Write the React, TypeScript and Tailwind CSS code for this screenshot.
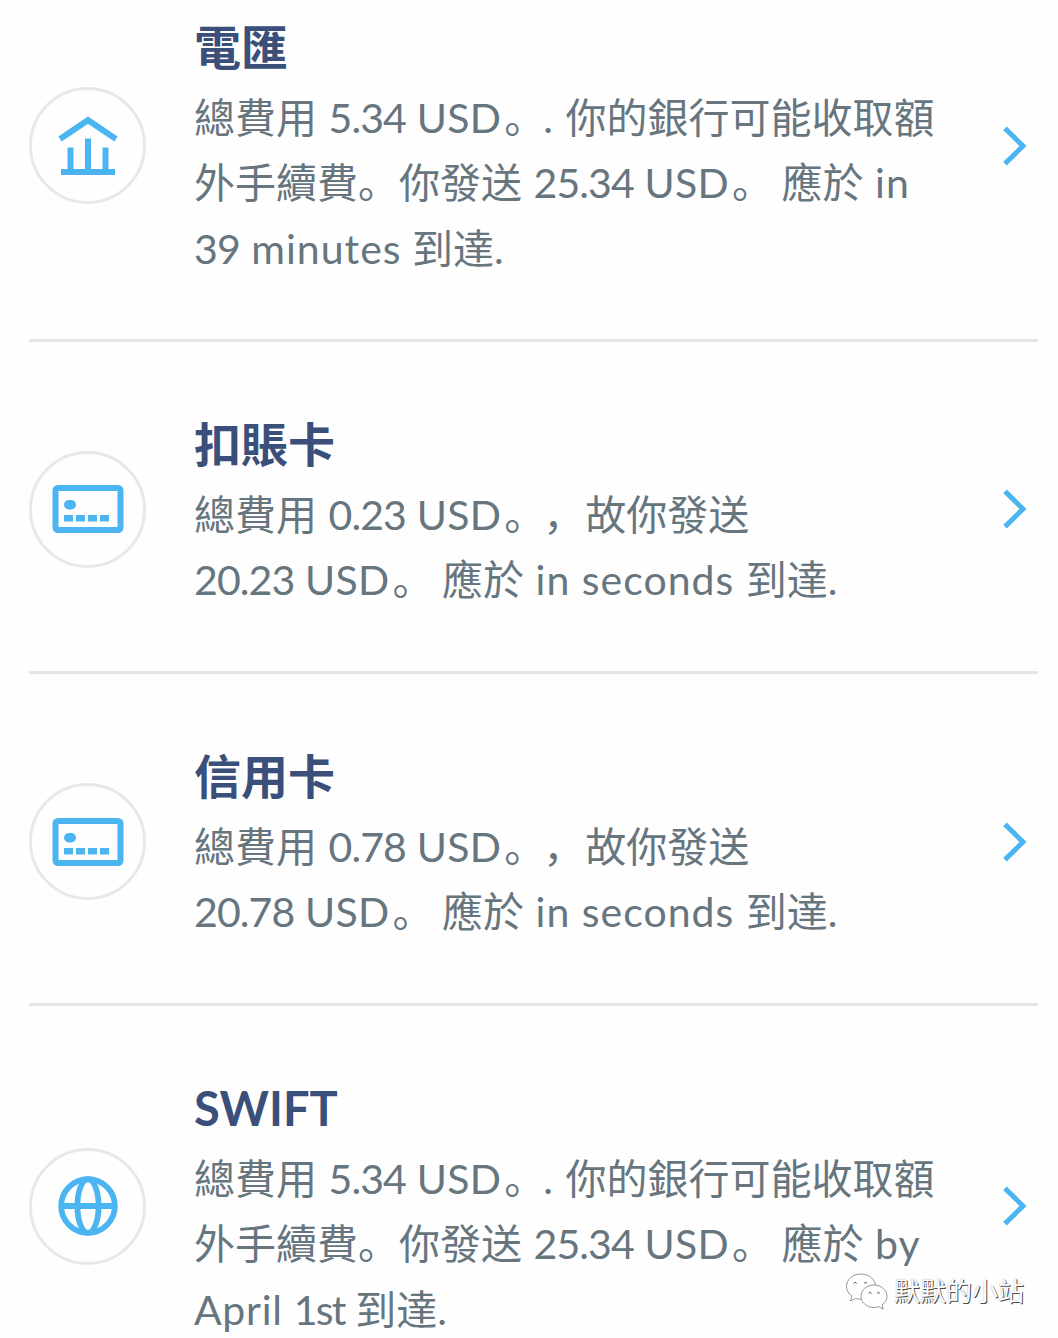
import type { ReactNode } from "react"

type Method = {
  id: string
  title: string
  icon: ReactNode
  lines: ReactNode[]
}

function BankIcon() {
  return (
    <svg width="60" height="60" viewBox="0 0 60 60" fill="none" stroke="#4bb5f1">
      <path d="M2 23 30 4.2 58 23" strokeWidth="6" />
      <path d="M3 56h54M12.5 55V31.5M30 55V22.5M47.5 55V31.5" strokeWidth="6" />
    </svg>
  )
}

function CardIcon() {
  return (
    <svg width="72" height="48" viewBox="0 0 72 48" fill="none">
      <rect x="3.5" y="3" width="65" height="42" rx="2.5" stroke="#4bb5f1" strokeWidth="6" />
      <rect x="12" y="15" width="12" height="9.5" rx="4.7" fill="#4bb5f1" />
      <path d="M12 33.2h9M24 33.2h9M36 33.2h9M48 33.2h9" stroke="#4bb5f1" strokeWidth="6.4" />
    </svg>
  )
}

function GlobeIcon() {
  return (
    <svg width="60" height="60" viewBox="0 0 60 60" fill="none" stroke="#4bb5f1" strokeWidth="5.8">
      <circle cx="30" cy="30" r="26.8" />
      <ellipse cx="30" cy="30" rx="10.6" ry="26.8" />
      <path d="M3 30h54" />
    </svg>
  )
}

function Chevron() {
  return (
    <svg width="24" height="40" viewBox="0 0 24 40" fill="none" stroke="#4bb5f1" strokeWidth="5">
      <path d="M2 2.4 20 20 2 37.6" />
    </svg>
  )
}

function En({ children }: { children: ReactNode }) {
  return <span className="tracking-[1px]">{children}</span>
}

function Num({ children }: { children: ReactNode }) {
  return <span className="tracking-[-0.9px]">{children}</span>
}

function Usd({ amount }: { amount: string }) {
  return (
    <>
      <Num>{amount}</Num>
      <span className="mr-[3px] tracking-[0.3px]"> USD</span>
      <span className="tracking-[-2px]">。</span>
    </>
  )
}

const methods: Method[] = [
  {
    id: "wire",
    title: "電匯",
    icon: <BankIcon />,
    lines: [
      <>總費用<En> </En><Usd amount="5.34" /><En>. </En>你的銀行可能收取額</>,
      <>外手續費。你發送<En> </En><Usd amount="25.34" /> 應於<En> in</En></>,
      <><Num>39</Num><En> minutes</En> 到達.</>,
    ],
  },
  {
    id: "debit",
    title: "扣賬卡",
    icon: <CardIcon />,
    lines: [
      <>總費用<En> </En><Usd amount="0.23" />，<span className="ml-px">故你發送</span></>,
      <><Usd amount="20.23" /> 應於<En> in seconds </En>到達.</>,
    ],
  },
  {
    id: "credit",
    title: "信用卡",
    icon: <CardIcon />,
    lines: [
      <>總費用<En> </En><Usd amount="0.78" />，<span className="ml-px">故你發送</span></>,
      <><Usd amount="20.78" /> 應於<En> in seconds </En>到達.</>,
    ],
  },
  {
    id: "swift",
    title: "SWIFT",
    icon: <GlobeIcon />,
    lines: [
      <>總費用<En> </En><Usd amount="5.34" /><En>. </En>你的銀行可能收取額</>,
      <>外手續費。你發送<En> </En><Usd amount="25.34" /> 應於<En> by</En></>,
      <><span className="tracking-[0.7px]">April </span><span className="tracking-[-1.8px]">1st</span> 到達.</>,
    ],
  },
]

function MethodRow({ method }: { method: Method }) {
  return (
    <li className="flex items-center border-b-[3px] border-[#e4e7e8] pt-[69px] pb-[58.4px] first:pt-[14px] first:pb-[57.4px] last:border-b-0 last:pb-0">
      <div className="mb-1 flex size-[117px] shrink-0 items-center justify-center rounded-full border-[3px] border-[#e6e8eb]">
        {method.icon}
      </div>
      <div className="ml-12 flex-1">
        <h2 className="mb-[5px] h-[66px] text-[47px] leading-[66px] font-bold text-[#3a4f7a]">{method.title}</h2>
        {method.lines.map((line, i) => (
          <p key={i} className="h-[65.4px] text-[41px] leading-[65.4px] whitespace-pre text-[#66757e]">
            {line}
          </p>
        ))}
      </div>
      <div className="mr-[11px] mb-1 shrink-0">
        <Chevron />
      </div>
    </li>
  )
}

function Watermark() {
  return (
    <div className="absolute top-[1270px] left-[845px] flex items-center gap-1.5">
      <svg width="43" height="39" viewBox="0 0 43 39" fill="white" stroke="#8a8a8a" strokeWidth="0.9">
        <path d="M16 2C8 2 1.5 7.400 1.500 14.500c0 4 2.200 7.300 5.400 9.500L5.500 29l5-2.600c1.700.5 3.500.8 5.500.8 8 0 14.500-5.500 14.500-12.700S24 2 16 2z" />
        <path d="M29 13c-7.200 0-13 5-13 11.300S21.800 35.500 29 35.500c1.700 0 3.300-.3 4.700-.8l4.500 2.500-1.200-4.400c3-2 5-5 5-8.500C42 18 36.200 13 29 13z" />
        <path d="M8.500 11.500q1.600-2.600 3.200 0M19 11.500q1.600-2.600 3.200 0M23.500 21.500q1.500-2.400 3 0M32 21.500q1.500-2.400 3 0" fill="none" stroke="#444" />
      </svg>
      <span className="text-[26px] leading-[42px] whitespace-nowrap text-white [text-shadow:1px_1px_0_#4a4a4a,0_0_1px_#999]">
        默默的小站
      </span>
    </div>
  )
}

export default function App() {
  return (
    <main className="relative h-[1338px] w-[1058px] overflow-hidden bg-[#fefefe] pr-5 pl-[29px] font-[Lato,'Noto_Sans_CJK_SC',sans-serif] [text-spacing-trim:space-all]">
      <ul>
        {methods.map((method) => (
          <MethodRow key={method.id} method={method} />
        ))}
      </ul>
      <Watermark />
    </main>
  )
}
